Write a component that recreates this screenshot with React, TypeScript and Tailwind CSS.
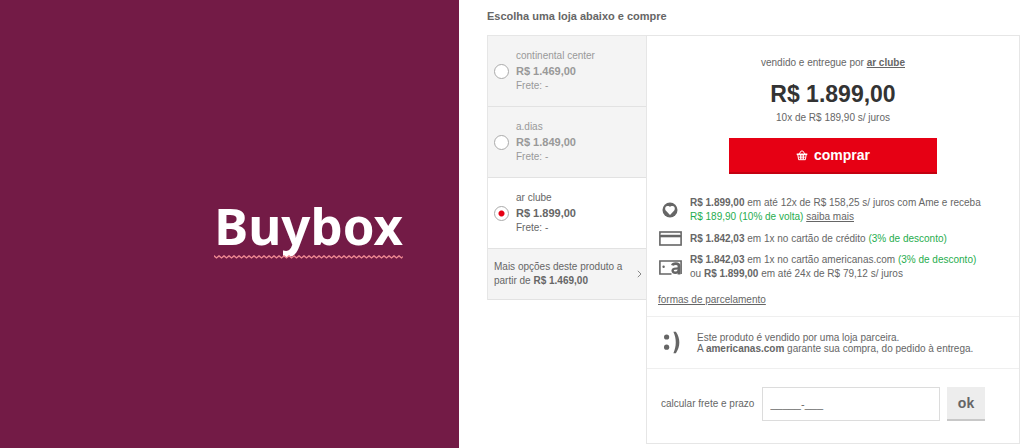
import { useState } from 'react';
import type { ReactNode } from 'react';

type Store = { id: string; name: string; price: string };

const stores: Store[] = [
  { id: 'continental', name: 'continental center', price: 'R$ 1.469,00' },
  { id: 'adias', name: 'a.dias', price: 'R$ 1.849,00' },
  { id: 'arclube', name: 'ar clube', price: 'R$ 1.899,00' },
];

function HeartBadge() {
  return (
    <svg viewBox="0 0 16 16" className="size-4" aria-hidden="true">
      <circle cx="8" cy="8" r="7.5" fill="#666" />
      <path d="M8 12.9 4 8.8C2.6 7.2 3 4.2 5.4 4 6.7 3.9 7.5 4.4 8 5 8.5 4.4 9.3 3.9 10.6 4 13 4.2 13.4 7.2 12 8.8Z" fill="#fff" />
    </svg>
  );
}

function CardIcon() {
  return (
    <svg viewBox="0 0 23 15" className="h-[15px] w-[23px]" aria-hidden="true">
      <rect x="0.9" y="1" width="21.2" height="13" fill="#fff" stroke="#666" strokeWidth="1.6" />
      <path d="M1 4h21v2.3H1z" fill="#666" />
      <path d="M1.6 3.4h19.8" stroke="#bbb" strokeWidth="0.6" />
    </svg>
  );
}

function StoreCardIcon() {
  return (
    <svg viewBox="0 0 23 15" className="h-[15px] w-[23px]" aria-hidden="true">
      <path d="M12.5 14H0.9V1h21.2v13" fill="#fff" stroke="#666" strokeWidth="1.6" />
      <circle cx="4.6" cy="6.8" r="1.2" fill="#666" />
      <g fill="none" stroke="#666">
        <path d="M13.4 5.3C13.8 3.9 15 3.7 16.8 3.7c2 0 3.2.6 3.2 2.3V14.6" strokeWidth="2.8" />
        <path d="M19.6 8.4c-3.6 0-6 .4-6 2.2 0 1.5 1.2 2.2 2.6 2.2 1.8 0 3.2-.9 3.4-2.4" strokeWidth="2.4" />
      </g>
    </svg>
  );
}

function BasketIcon() {
  return (
    <svg viewBox="0 0 12 12" className="size-3" fill="none" stroke="#fff" aria-hidden="true">
      <path d="M3 5 5.2 2h1.6L9 5" strokeWidth="1" />
      <path d="M0.7 5.3h10.6" strokeWidth="1.6" />
      <path d="M1.8 5.6 2.6 10.7h6.8l.8-5.1M4.4 6v4.4M6 6v4.4M7.6 6v4.4" strokeWidth="1" />
      <path d="M2.2 8.2h7.6" strokeWidth="0.7" />
    </svg>
  );
}

function Squiggle() {
  return (
    <svg className="absolute top-full left-0 h-1 w-full" aria-hidden="true">
      <defs>
        <pattern id="squiggle" width="5" height="4" patternUnits="userSpaceOnUse">
          <path d="M-1 0.2 0 0.8 2.5 3 5 0.8 6 0.2" fill="none" stroke="#f08a92" strokeWidth="1.3" />
        </pattern>
      </defs>
      <rect width="100%" height="4" fill="url(#squiggle)" />
    </svg>
  );
}

function Payment({ icon, children }: { icon: ReactNode; children: ReactNode }) {
  return (
    <li className="flex items-center gap-2">
      <span className="flex w-6 shrink-0 justify-center">{icon}</span>
      <p>{children}</p>
    </li>
  );
}

export default function App() {
  const [selected, setSelected] = useState('arclube');
  const [cep, setCep] = useState('_____-___');

  return (
    <div className="grid min-h-screen grid-cols-[459fr_565fr] bg-white font-['Liberation_Sans',Arial,sans-serif] text-[10px] leading-[14px] text-[#666]">
      <section className="flex items-center justify-end bg-[#731b46] pt-0.5 pr-14">
        <h1 className="relative font-['Noto_Sans',sans-serif] text-[51px] leading-[60px] font-bold text-white">
          Buybox
          <Squiggle />
        </h1>
      </section>

      <main className="pt-2 pr-1 pb-1 pl-7">
        <h2 className="mb-[11px] text-[11px] leading-4 font-bold">Escolha uma loja abaixo e compre</h2>

        <div className="grid grid-cols-[159fr_374fr] items-start">
          <aside className="border-t border-l border-[#e6e6e6]">
            <fieldset aria-label="Lojas">
              {stores.map((store) => {
                const active = store.id === selected;
                return (
                  <label
                    key={store.id}
                    className={
                      active
                        ? 'flex cursor-pointer items-center gap-[7px] border-b border-[#e2e2e2] bg-white py-[13px] pl-[6px]'
                        : 'flex cursor-pointer items-center gap-[7px] border-b border-[#e2e2e2] bg-[#f4f4f4] py-[13px] pl-[6px] text-[#999]'
                    }
                  >
                    <input
                      type="radio"
                      name="store"
                      checked={active}
                      onChange={() => setSelected(store.id)}
                      className="size-[15px] shrink-0 appearance-none rounded-full border border-[#aaa] bg-white checked:bg-[radial-gradient(circle,#e60014_2.5px,#fff_3.5px)]"
                    />
                    <span className="flex flex-col">
                      <span>{store.name}</span>
                      <strong className="text-[11px] leading-4">{store.price}</strong>
                      <span>Frete: -</span>
                    </span>
                  </label>
                );
              })}
            </fieldset>
            <a
              href="#opcoes"
              className="flex items-center justify-between border-b border-[#e2e2e2] bg-[#f4f4f4] py-[11px] pr-1 pl-[6px]"
            >
              <span>
                Mais opções deste produto a<br />
                partir de <strong>R$ 1.469,00</strong>
              </span>
              <svg viewBox="0 0 5 8" className="h-2 w-[5px]" fill="none" stroke="#888" aria-hidden="true">
                <path d="M0.8 0.8 4 4 0.8 7.2" />
              </svg>
            </a>
          </aside>

          <div className="border border-[#e6e6e6]">
            <section className="flex flex-col items-center pt-5">
              <p>
                vendido e entregue por{' '}
                <a href="#loja" className="font-bold underline">
                  ar clube
                </a>
              </p>
              <p className="mt-2 text-[23px] leading-8 font-bold text-[#333]">R$ 1.899,00</p>
              <p className="mt-px">10x de R$ 189,90 s/ juros</p>
              <button
                type="button"
                className="mt-[13px] flex h-9 w-[56%] items-center justify-center gap-[6px] border-b-2 border-[#c40010] bg-[#e60014] text-sm font-bold text-white"
              >
                <BasketIcon />
                comprar
              </button>
            </section>

            <section className="pt-[22px] pr-2 pb-[9px] pl-[11px]">
              <ul className="flex flex-col gap-[7px]">
                <Payment icon={<HeartBadge />}>
                  <strong>R$ 1.899,00</strong> em até 12x de R$ 158,25 s/ juros com Ame e receba
                  <br />
                  <span className="text-[#1fad4e]">R$ 189,90 (10% de volta)</span>{' '}
                  <a href="#ame" className="underline">
                    saiba mais
                  </a>
                </Payment>
                <Payment icon={<CardIcon />}>
                  <strong>R$ 1.842,03</strong> em 1x no cartão de crédito{' '}
                  <span className="text-[#1fad4e]">(3% de desconto)</span>
                </Payment>
                <Payment icon={<StoreCardIcon />}>
                  <strong>R$ 1.842,03</strong> em 1x no cartão americanas.com{' '}
                  <span className="text-[#1fad4e]">(3% de desconto)</span>
                  <br />
                  ou <strong>R$ 1.899,00</strong> em até 24x de R$ 79,12 s/ juros
                </Payment>
              </ul>
              <a href="#parcelamento" className="mt-3 inline-block underline">
                formas de parcelamento
              </a>
            </section>

            <section className="flex items-center gap-4 border-y border-[#efefef] py-[14px] pl-4">
              <svg viewBox="0 0 18 23" className="h-[23px] w-[18px]" fill="#666" aria-hidden="true">
                <circle cx="3.6" cy="6" r="2.6" />
                <circle cx="3.6" cy="16.2" r="2.6" />
                <path d="M10.4 0.8h2.5c4.6 6.6 4.6 14.8 0 21.4h-2.5c3.2-7 3.2-14.4 0-21.4z" />
              </svg>
              <p className="leading-[11px]">
                Este produto é vendido por uma loja parceira.
                <br />A <strong>americanas.com</strong> garante sua compra, do pedido à entrega.
              </p>
            </section>

            <form className="flex items-center pt-[18px] pr-[34px] pb-[22px] pl-[14px]" onSubmit={(e) => e.preventDefault()}>
              <label htmlFor="cep" className="mr-2 shrink-0">
                calcular frete e prazo
              </label>
              <input
                id="cep"
                value={cep}
                onChange={(e) => setCep(e.target.value)}
                className="h-[34px] min-w-0 flex-1 border border-[#dcdcdc] px-[7px] text-[11px] outline-none"
              />
              <button
                type="submit"
                className="ml-[7px] h-[34px] w-[38px] shrink-0 border-b-2 border-[#c8c8c8] bg-[#ededed] text-sm font-bold"
              >
                ok
              </button>
            </form>
          </div>
        </div>
      </main>
    </div>
  );
}
